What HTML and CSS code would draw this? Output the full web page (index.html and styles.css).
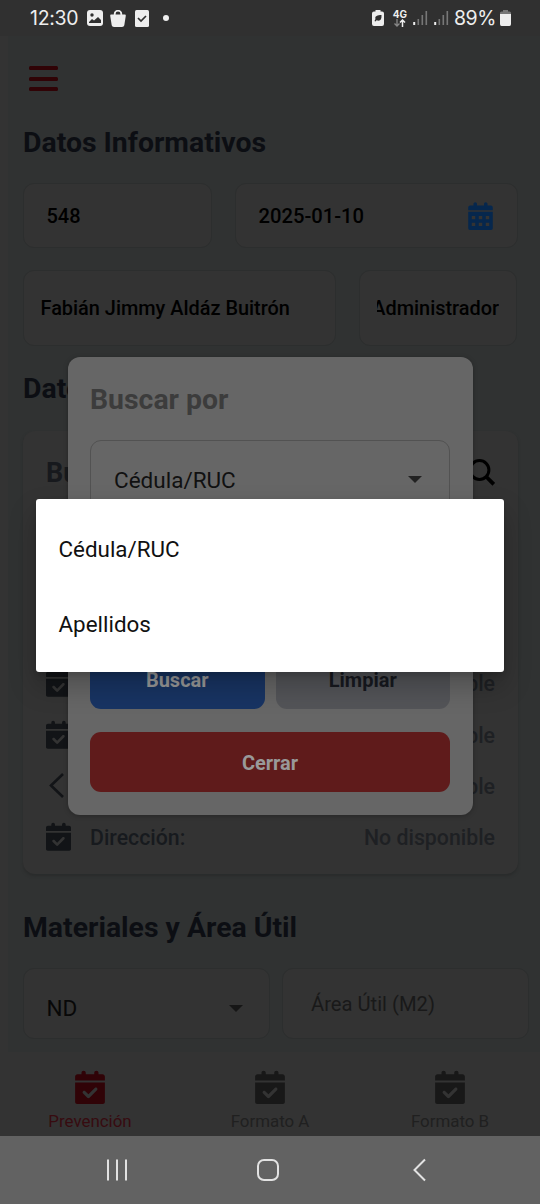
FILE: index.html
```html
<!DOCTYPE html>
<html lang="es">
<head>
<meta charset="utf-8">
<title>Datos Informativos</title>
<link rel="stylesheet" href="styles.css">
</head>
<body>
<svg class="defs" aria-hidden="true">
  <symbol id="cal-check" viewBox="0 0 448 512"><path d="M128 10c17.700 0 32 14.300 32 32V64H288V42c0-17.700 14.300-32 32-32s32 14.300 32 32V64h60c20 0 36 16 36 36v58H0V100C0 80 16 64 36 64H96V42c0-17.700 14.300-32 32-32zM0 190H448V482c0 16-14 30-30 30H30c-16 0-30-14-30-30V190zM329 305c9.400-9.400 9.400-24.600 0-33.900s-24.600-9.400-33.900 0l-95 95-47-47c-9.400-9.400-24.600-9.400-33.900 0s-9.400 24.600 0 33.900l64 64c9.400 9.400 24.600 9.400 33.900 0L329 305z"/></symbol>
  <symbol id="bars" viewBox="0 0 15 16"><g fill="#777"><path d="M4.500 9h1.600v6H4.500zM8.500 5h1.600v10H8.500zM12.500 1h1.600v14h-1.600z"/></g><path fill="#eee" d="M.2 12h2v3h-2z"/></symbol>
</svg>
<div class="screen">
  <header class="status">
    <span class="clock">12:30</span>
    <svg class="s-photo" width="16" height="16" viewBox="0 0 16 16"><rect width="16" height="16" rx="3" fill="#eee"/><circle cx="5" cy="5" r="1.700" fill="#303030"/><path d="M2 13v-1l3-3 2 1.500L11 7l3 3v3z" fill="#303030"/></svg>
    <svg class="s-bag" width="16" height="17" viewBox="0 0 16 17"><path d="M4.700 6V4a3.300 3.300 0 0 1 6.600 0v2" fill="none" stroke="#eee" stroke-width="1.800"/><path d="M1.200 4.500h13.600q1.200 0 1 1.200l-1.500 9.500Q14 17 12 17H4q-2 0-2.300-1.800L.2 5.700Q0 4.500 1.200 4.500z" fill="#eee"/></svg>
    <svg class="s-check" width="14" height="17" viewBox="0 0 14 17"><rect width="14" height="17" rx="1.500" fill="#eee"/><path d="M3 8l3 3 5-5" fill="none" stroke="#303030" stroke-width="1.700"/></svg>
    <span class="dot"></span>
    <span class="grow"></span>
    <svg class="s-eco" width="12" height="16" viewBox="0 0 12 16"><path d="M3.500 0h5v1.500H10q2 0 2 2V14q0 2-2 2H2q-2 0-2-2V3.500q0-2 2-2h1.500z" fill="#eee"/><path d="M2.500 11l1-2c-1-3 2-4 6-4 .3 5-1.500 6.500-5 5.200l-1 1.300z" fill="#303030"/></svg>
    <span class="net"><b>4G</b><svg width="12" height="8" viewBox="0 0 12 8"><path d="M3 0v7M.5 4.500L3 7l2.500-2.500" fill="none" stroke="#888" stroke-width="1.300"/><path d="M8.500 8V1M6 3.500L8.500 1 11 3.500" fill="none" stroke="#eee" stroke-width="1.500"/></svg></span>
    <svg class="s-sig" width="15" height="16"><use href="#bars"/></svg>
    <svg class="s-sig2" width="15" height="16"><use href="#bars"/></svg>
    <span class="pct">89%</span>
    <svg class="s-bat" width="11" height="16" viewBox="0 0 11 16"><path d="M3 0h5v1.500h1.500Q11 1.500 11 3v2H0V3q0-1.500 1.500-1.500H3z" fill="#777"/><path d="M0 4h11v10q0 2-1.500 2h-8Q0 16 0 14z" fill="#eee"/></svg>
  </header>

  <main class="app">
    <div class="menu"><i></i><i></i><i></i></div>
    <h2 class="title">Datos Informativos</h2>
    <div class="row row-a">
      <div class="field">548</div>
      <div class="field date">2025-01-10
        <svg width="25" height="28" viewBox="0 0 448 512"><path fill="#06274d" fill-rule="evenodd" d="M128 6c17.700 0 32 14.300 32 32V64H288V38c0-17.700 14.300-32 32-32s32 14.300 32 32V64h60c20 0 36 16 36 36v52H0V100C0 80 16 64 36 64H96V38c0-17.700 14.300-32 32-32zM0 180H448V482c0 16-14 30-30 30H30c-16 0-30-14-30-30zM64 256h64v60H64zM192 256h64v60h-64zM320 256h64v60h-64zM64 380h64v60H64zM192 380h64v60h-64zM320 380h64v60h-64z"/></svg>
      </div>
    </div>
    <div class="row row-b">
      <div class="field">Fabián Jimmy Aldáz Buitrón</div>
      <div class="field"><span class="clip"><span>Administrador</span></span></div>
    </div>
    <h2 class="title title-b">Datos</h2>
    <section class="card">
      <div class="card-head"><span>Buscar</span>
        <svg width="28" height="28" viewBox="0 0 28 28"><circle cx="12.500" cy="11" r="9.400" fill="none" stroke="#000" stroke-width="3"/><path d="M19 17.500L26.800 25.300" stroke="#000" stroke-width="3.800"/></svg>
      </div>
      <div class="info"><svg class="ci"><use href="#cal-check"/></svg><span class="val">No disponible</span></div>
      <div class="info"><svg class="ci"><use href="#cal-check"/></svg><span class="val">No disponible</span></div>
      <div class="info"><svg class="ci" viewBox="0 0 25 29"><path class="chev" d="M17 3L5 14.500 17 26"/></svg><span class="val">No disponible</span></div>
      <div class="info"><svg class="ci"><use href="#cal-check"/></svg><span class="label">Dirección:</span><span class="val">No disponible</span></div>
    </section>
    <h2 class="title title-c">Materiales y Área Útil</h2>
    <div class="row row-c">
      <div class="field select">ND<i class="caret"></i></div>
      <div class="field area">Área Útil (M2)</div>
    </div>
  </main>

  <nav class="tabs">
    <div class="tab active"><svg><use href="#cal-check"/></svg><span>Prevención</span></div>
    <div class="tab"><svg><use href="#cal-check"/></svg><span>Formato A</span></div>
    <div class="tab"><svg><use href="#cal-check"/></svg><span>Formato B</span></div>
  </nav>

  <footer class="sysnav">
    <svg width="540" height="68" viewBox="0 0 540 68" fill="none" stroke="#e2e2e2" stroke-width="2"><path d="M108 23.500v21M117 23.500v21M126 23.500v21"/><rect x="258" y="24" width="20" height="20" rx="6"/><path d="M425 23.500L414.500 34 425 44.500"/></svg>
  </footer>

  <section class="modal">
    <h2>Buscar por</h2>
    <div class="modal-select"><span>Cédula/RUC</span><i class="caret"></i></div>
    <div class="buttons">
      <div class="btn blue">Buscar</div>
      <div class="btn gray">Limpiar</div>
    </div>
    <div class="btn red">Cerrar</div>
  </section>

  <div class="options">
    <div>Cédula/RUC</div>
    <div>Apellidos</div>
  </div>
</div>
</body>
</html>
```
FILE: styles.css
```css
* { box-sizing: border-box; }
body { margin: 0; font-family: Roboto, sans-serif; }
h2 { margin: 0; }
svg { display: block; flex: none; }
.defs { position: absolute; width: 0; height: 0; }
.screen { position: relative; width: 540px; height: 1204px; overflow: hidden; display: flex; flex-direction: column; background: #333; }
.status { height: 36px; background: #303030; display: flex; align-items: center; padding: 0 29px 0 30px; color: #eee; font: 400 19.500px/36px Inter, sans-serif; flex: none; }
.clock { width: 57px; letter-spacing: -0.300px; }
.s-bag { margin-left: 7px; }
.s-check { margin-left: 9px; }
.dot { width: 6px; height: 6px; border-radius: 50%; background: #eee; margin-left: 14px; }
.grow { flex: 1; }
.net { margin-left: 9px; width: 14px; font-size: 10px; line-height: 8px; display: flex; flex-direction: column; align-items: center; gap: 1px; }
.s-eco { margin-right: 0; }
.s-sig { margin-left: 6px; }
.s-sig2 { margin-left: 6px; }
.pct { margin-left: 5px; width: 45px; white-space: nowrap; letter-spacing: -0.500px; }
.s-bat { margin-left: 1px; }

.app { height: 1016px; flex: none; margin-left: 8px; padding: 30px 0 0 15px; background: #303232; }
.menu { width: 29px; height: 25px; margin-left: 6px; display: flex; flex-direction: column; justify-content: space-between; }
.menu i { height: 4px; border-radius: 1.500px; background: #300306; }
.title { font-size: 28.400px; line-height: 36px; font-weight: 700; color: #0c0e13; margin-top: 34px; white-space: nowrap; }
.row { display: grid; }
.row-a { grid-template-columns: 189px 283px; gap: 23px; margin-top: 22px; height: 65px; }
.row-b { grid-template-columns: 313px 158px; gap: 23px; margin-top: 22px; height: 76px; }
.row-c { grid-template-columns: 247px 247px; gap: 12px; margin-top: 22px; height: 71px; }
.field { border: 1.500px solid #2c2e2e; border-radius: 11px; background: #333; padding: 1px 22.500px 0; display: flex; align-items: center; justify-content: space-between; font-size: 20px; font-weight: 500; color: #000; white-space: nowrap; overflow: hidden; }
.date { padding-right: 24px; padding-top: 0; font-size: 20.200px; }
.row-b .field { padding: 1px 17px 0 16.500px; font-size: 19.900px; }
.clip { width: 123px; overflow: hidden; display: flex; justify-content: flex-end; }
.title-b { margin-top: 25px; }
.card { width: 495px; height: 443px; margin-top: 24px; border-radius: 12px; background: #333; box-shadow: 0 2px 3px #292b2b; padding: 0 23px 11px; display: flex; flex-direction: column; }
.card-head { height: 83px; display: flex; align-items: center; justify-content: space-between; font-size: 27px; font-weight: 700; color: #17191d; margin-bottom: auto; }
.info { height: 51.200px; display: flex; align-items: center; font-size: 21.300px; font-weight: 500; }
.ci { width: 25px; height: 29px; fill: #121417; margin-top: -2px; }
.chev { fill: none; stroke: #121417; stroke-width: 2.600; }
.label { color: #171a1e; margin-left: 19px; }
.val { margin-left: auto; color: #1e2023; }
.title-c { margin-top: 36px; }
.select { font-size: 22.500px; font-weight: 400; padding-top: 9px; color: #080808; }
.caret { border: 7px solid transparent; border-top-color: #161616; border-bottom: 0; margin-right: 4px; }
.area { font-size: 20.200px; font-weight: 400; color: #191919; padding-left: 28px; }

.tabs { height: 84px; flex: none; display: grid; grid-template-columns: repeat(3, 1fr); background: #333; }
.tab { display: flex; flex-direction: column; align-items: center; padding-top: 18px; font-size: 16.900px; line-height: 20px; color: #202020; fill: #181818; }
.tab svg { width: 30px; height: 34px; }
.tab span { margin-top: 7px; }
.tab.active { color: #370b10; fill: #300307; }
.sysnav { height: 68px; background: #626262; flex: none; }

.modal { position: absolute; left: 67.500px; top: 356.500px; width: 405px; height: 458px; border-radius: 12px; background: #666; padding: 24px 22.500px 22.500px; display: flex; flex-direction: column; box-shadow: 0 1px 5px rgba(0,0,0,.25); }
.modal h2 { font-size: 28.400px; line-height: 38px; color: #3c3c3c; }
.modal-select { margin-top: 21px; height: 77px; border: 1.500px solid #525252; border-radius: 11px; display: flex; align-items: center; justify-content: space-between; padding: 3px 23px 0; font-size: 22.500px; color: #111; }
.modal-select .caret { border-top-color: #222; }
.buttons { margin-top: auto; display: grid; grid-template-columns: 1fr 1fr; gap: 11px; }
.btn { height: 60.500px; border-radius: 11px; display: flex; align-items: center; justify-content: center; font-size: 20px; font-weight: 700; color: #999; padding-top: 2px; }
.blue { background: #183463; }
.gray { background: #535458; color: #17191f; }
.red { background: #5f1b1b; margin-top: 22.500px; }

.options { position: absolute; left: 36px; top: 499px; width: 468px; height: 173px; border-radius: 3px; background: #fff; padding: 12px 22.500px; box-shadow: 0 14px 28px rgba(0,0,0,.24), 0 3px 6px rgba(0,0,0,.15); }
.options div { height: 75px; line-height: 76px; font-size: 22.400px; color: #111; }
```
